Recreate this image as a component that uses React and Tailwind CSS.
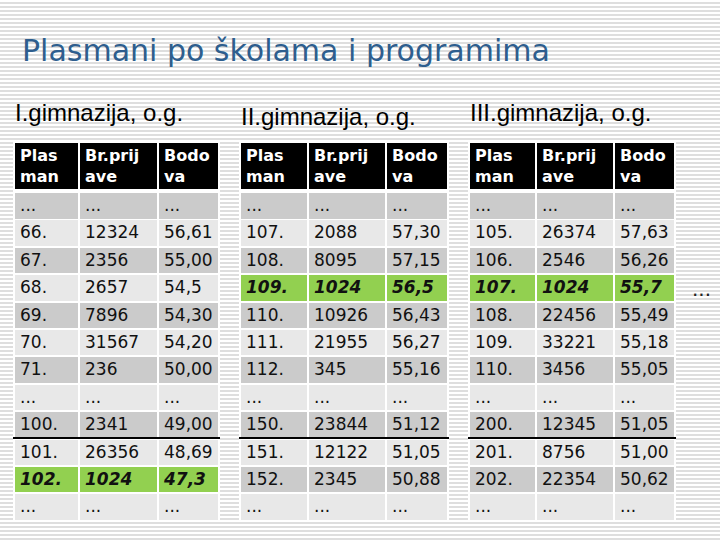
const tables = [
  {
    title: "I.gimnazija, o.g.",
    shift: "pt-0",
    cols: "grid-cols-[63px_77px_59px]",
    green: 10,
    rows: [
      ["...", "...", "..."],
      ["66.", "12324", "56,61"],
      ["67.", "2356", "55,00"],
      ["68.", "2657", "54,5"],
      ["69.", "7896", "54,30"],
      ["70.", "31567", "54,20"],
      ["71.", "236", "50,00"],
      ["...", "...", "..."],
      ["100.", "2341", "49,00"],
      ["101.", "26356", "48,69"],
      ["102.", "1024", "47,3"],
      ["...", "...", "..."],
    ],
  },
  {
    title: "II.gimnazija, o.g.",
    shift: "pt-[4px]",
    cols: "grid-cols-[66px_76px_60px]",
    green: 3,
    rows: [
      ["...", "...", "..."],
      ["107.", "2088", "57,30"],
      ["108.", "8095", "57,15"],
      ["109.", "1024", "56,5"],
      ["110.", "10926", "56,43"],
      ["111.", "21955", "56,27"],
      ["112.", "345", "55,16"],
      ["...", "...", "..."],
      ["150.", "23844", "51,12"],
      ["151.", "12122", "51,05"],
      ["152.", "2345", "50,88"],
      ["...", "...", "..."],
    ],
  },
  {
    title: "III.gimnazija, o.g.",
    shift: "pt-0",
    cols: "grid-cols-[65px_76px_59px]",
    green: 3,
    rows: [
      ["...", "...", "..."],
      ["105.", "26374", "57,63"],
      ["106.", "2546", "56,26"],
      ["107.", "1024", "55,7"],
      ["108.", "22456", "55,49"],
      ["109.", "33221", "55,18"],
      ["110.", "3456", "55,05"],
      ["...", "...", "..."],
      ["200.", "12345", "51,05"],
      ["201.", "8756", "51,00"],
      ["202.", "22354", "50,62"],
      ["...", "...", "..."],
    ],
  },
];

const head = [
  ["Plas", "man"],
  ["Br.prij", "ave"],
  ["Bodo", "va"],
];

function Table({ t }) {
  return (
    <div className="flex flex-col">
      <div className={`h-[40px] ${t.shift}`}>
        <p className="-mt-[2px] text-[24px] leading-[28px] text-black font-['Liberation_Sans',Arial,sans-serif] pl-[2px]">
          {t.title}
        </p>
      </div>
      <div className="bg-white p-[2px] flex flex-col gap-[3px] font-['DejaVu_Sans',Verdana,sans-serif]">
        <div className={`grid ${t.cols} gap-x-[2px] h-[46px] mb-[1px]`}>
          {head.map((h, i) => (
            <div key={i} className="bg-black text-white font-bold text-[16px] leading-[21px] pl-[5px] flex flex-col justify-center">
              <span>{h[0]}</span>
              <span>{h[1]}</span>
            </div>
          ))}
        </div>
        {t.rows.map((r, i) => {
          const isGreen = i === t.green;
          const bg = isGreen ? "bg-[#92d050]" : i % 2 === 0 ? "bg-[#cbcbcb]" : "bg-[#e8e8e8]";
          return (
            <div key={i} className="contents">
              <div className={`grid ${t.cols} gap-x-[2px] h-[24.4px]`}>
                {r.map((c, j) => (
                  <div
                    key={j}
                    className={`${bg} flex items-center pl-[5px] text-[17px] text-[#111] ${isGreen ? "font-bold italic" : ""}`}
                  >
                    {c}
                  </div>
                ))}
              </div>
              {i === 8 && <div className="h-[2px] -my-[2.5px] -mx-[2px] bg-black" />}
            </div>
          );
        })}
      </div>
    </div>
  );
}

export default function App() {
  return (
    <div className="w-[720px] h-[540px] overflow-hidden bg-[repeating-linear-gradient(to_bottom,#ffffff_0px,#ffffff_2.5px,#dedede_2.5px,#dedede_4px)]">
      <h1 className="pt-[33px] pl-[22px] text-[30px] leading-[36px] text-[#2e5e8e] font-['DejaVu_Sans',Verdana,sans-serif] font-normal">
        Plasmani po školama i programima
      </h1>
      <div className="flex gap-[19px] pl-[13px] mt-[32px]">
        {tables.map((t, i) => (
          <Table key={i} t={t} />
        ))}
        <div className="mt-[176px] -ml-[3px] text-[20px] leading-[24px] text-[#222] font-['DejaVu_Sans',Verdana,sans-serif]">
          ...
        </div>
      </div>
    </div>
  );
}
